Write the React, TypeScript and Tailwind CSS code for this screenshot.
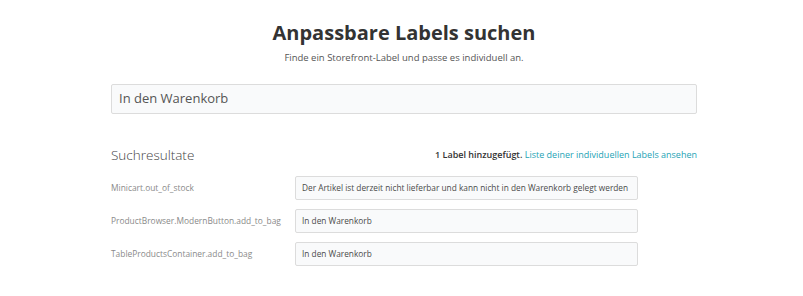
import React from 'react';

const rows = [
  { key: 'Minicart.out_of_stock', value: 'Der Artikel ist derzeit nicht lieferbar und kann nicht in den Warenkorb gelegt werden' },
  { key: 'ProductBrowser.ModernButton.add_to_bag', value: 'In den Warenkorb' },
  { key: 'TableProductsContainer.add_to_bag', value: 'In den Warenkorb' },
];

export default function App() {
  return (
    <div className="min-h-[296px] bg-white pl-[5px] font-['Open_Sans',sans-serif]">
      <div className="mx-auto w-[586px] pt-[18px]">
        <h1 className="text-center text-[20px] font-bold leading-[30px] text-[#333]">Anpassbare Labels suchen</h1>
        <p className="mt-[3px] text-center text-[9.5px] leading-[14px] text-[#555]">
          Finde ein Storefront-Label und passe es individuell an.
        </p>

        <div className="mt-[19px] flex h-[30px] items-center rounded-[2px] border border-[#dcdcdc] bg-[#f9fafb] px-[7px] text-[13px] text-[#555]">
          In den Warenkorb
        </div>

        <div className="mt-[31px] flex items-center justify-between">
          <h2 className="text-[13.5px] font-light text-[#444]">Suchresultate</h2>
          <p className="text-[9px] text-[#333]">
            <span className="font-semibold">1 Label hinzugefügt.</span>{' '}
            <a className="text-[#25a3b5]">Liste deiner individuellen Labels ansehen</a>
          </p>
        </div>

        <div className="mt-[11px] flex flex-col gap-[9px]">
          {rows.map((row) => (
            <div key={row.key} className="flex items-center">
              <span className="w-[184px] text-[8.4px] text-[#8a8a8a]">{row.key}</span>
              <div className="flex h-[24px] w-[343px] items-center whitespace-nowrap rounded-[2px] border border-[#dcdcdc] bg-[#f9fafb] px-[6px] text-[8.3px] text-[#4a4a4a]">
                {row.value}
              </div>
            </div>
          ))}
        </div>
      </div>
    </div>
  );
}
